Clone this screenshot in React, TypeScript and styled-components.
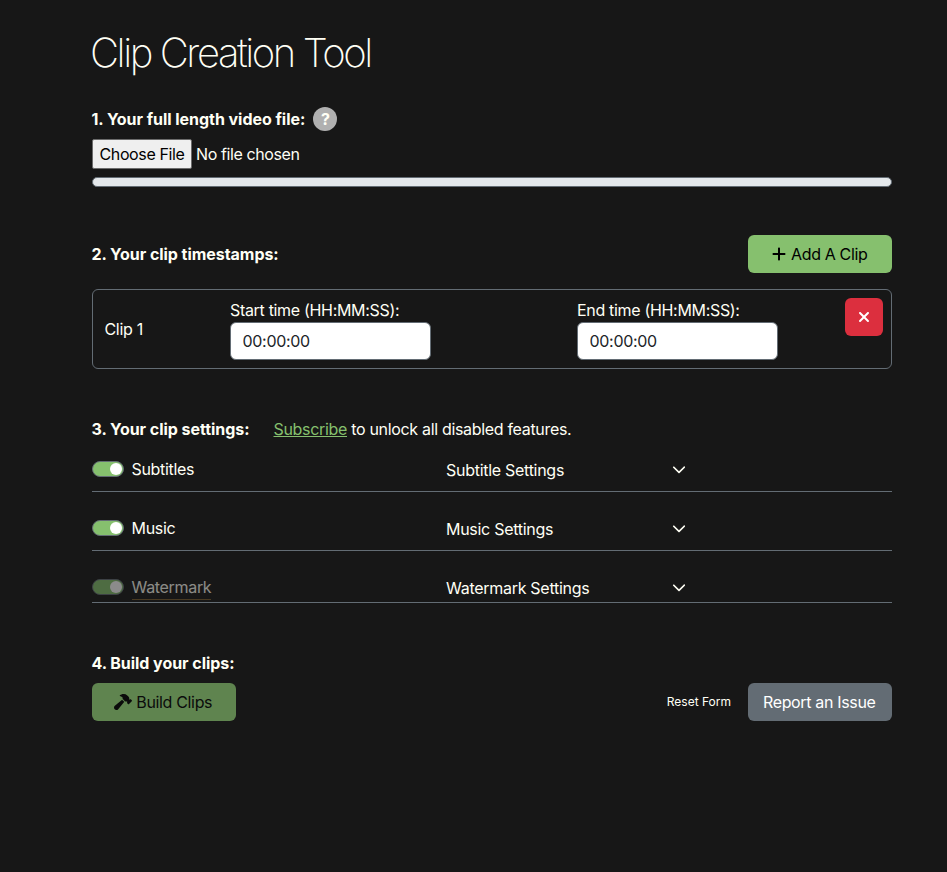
import React from "react";
import styled, { createGlobalStyle } from "styled-components";
import { FaPlus, FaXmark, FaHammer, FaChevronDown } from "react-icons/fa6";

const GlobalStyle = createGlobalStyle`
  *, *::before, *::after { box-sizing: border-box; }
  body {
    margin: 0;
    background: #171717;
    color: #fffff5;
    font: 400 16px/24px Inter, "Liberation Sans", sans-serif;
    letter-spacing: -0.32px;
  }
`;

const Page = styled.main`
  min-height: 872px;
  width: 892px;
  padding: 29px 0 0 92px;
`;

const Title = styled.h1`
  margin: 0 0 0 -2px;
  font-size: 40px;
  font-weight: 200;
  line-height: 48px;
  letter-spacing: -2.43px;
  white-space: nowrap;
`;

const Section = styled.section<{ $top: number }>`
  margin-top: ${(p) => p.$top}px;
`;

const Row = styled.div<{ $height?: number; $top?: number }>`
  display: flex;
  align-items: center;
  height: ${(p) => p.$height ?? 24}px;
  margin-top: ${(p) => p.$top ?? 0}px;
`;

const Heading = styled.h2`
  margin: 0 0 0 -0.5px;
  font-size: 16px;
  font-weight: 700;
  line-height: 24px;
  letter-spacing: -0.045px;
  white-space: nowrap;
`;

const Help = styled.span`
  width: 24px;
  height: 24px;
  margin-left: 8px;
  border-radius: 50%;
  background: #b0b0b0;
  color: #fffff5;
  font-weight: 700;
  text-align: center;
`;

const FileRow = styled.div`
  display: flex;
  align-items: center;
  margin-top: 8px;
  height: 30px;
`;

const ChooseButton = styled.button`
  width: 100px;
  height: 30px;
  padding: 0;
  margin-right: 4px;
  border: 1px solid #6b6b6b;
  border-radius: 2px;
  background: #efefef;
  color: #000;
  font: inherit;
  letter-spacing: -0.38px;
`;

const FileStatus = styled.span`
  letter-spacing: -0.4px;
`;

const Progress = styled.div`
  height: 10px;
  margin-top: 8px;
  border: 1px solid #636c74;
  border-radius: 5px;
  background: #e4e8eb;
`;

const Button = styled.button<{ $bg: string; $color?: string }>`
  display: flex;
  align-items: center;
  justify-content: center;
  gap: 4px;
  width: 144px;
  height: 38px;
  padding: 0 1.5px 0 0;
  border: 0;
  border-radius: 6px;
  background: ${(p) => p.$bg};
  color: ${(p) => p.$color ?? "#000"};
  font: inherit;
  letter-spacing: -0.34px;
  white-space: nowrap;
`;

const Spacer = styled.div`
  flex: 1;
`;

const ClipCard = styled.div`
  display: grid;
  grid-template-columns: 125px 347px 1fr 38px;
  height: 80px;
  margin-top: 16px;
  padding: 8px 8px 0 12px;
  border: 1px solid #636c74;
  border-radius: 6px;
`;

const ClipName = styled.div`
  padding-top: 19px;
  margin-left: -0.5px;
`;

const Label = styled.label`
  display: block;
  white-space: nowrap;
`;

const TimeInput = styled.input`
  display: block;
  width: 201px;
  height: 38px;
  padding: 0 11.5px;
  border: 1px solid #636c74;
  border-radius: 6px;
  background: #fff;
  color: #212529;
  font: inherit;
  letter-spacing: -0.3px;
`;

const DeleteButton = styled(Button)`
  width: 38px;
  padding: 0;
`;

const Notice = styled.span`
  margin-left: 24px;
  white-space: nowrap;
`;

const Link = styled.a`
  color: #86c06e;
  text-decoration: underline;
`;

const Setting = styled.div<{ $height: number; $top: number }>`
  display: grid;
  grid-template-columns: 354px 227px 1fr;
  height: ${(p) => p.$height}px;
  margin-top: ${(p) => p.$top}px;
  border-bottom: 1px solid #636c74;
`;

const SwitchLabel = styled.label<{ $disabled?: boolean }>`
  display: flex;
  align-items: flex-start;
  gap: 7.5px;
  height: 24px;
  opacity: ${(p) => (p.$disabled ? 0.5 : 1)};
`;

const Track = styled.span`
  display: flex;
  justify-content: flex-end;
  align-items: center;
  width: 32px;
  height: 16px;
  margin-top: 4px;
  padding-right: 1px;
  border: 1px solid #636c74;
  border-radius: 8px;
  background: #86c06e;
`;

const Knob = styled.span`
  width: 12px;
  height: 12px;
  border-radius: 50%;
  background: #fff;
`;

const SwitchText = styled.span<{ $underlined?: boolean }>`
  height: 25px;
  border-bottom: ${(p) => (p.$underlined ? "1px solid #7d6030" : "0")};
`;

const SettingName = styled.div`
  padding-top: 1px;
  letter-spacing: -0.28px;
`;

const Chevron = styled(FaChevronDown)`
  width: 14px;
  height: 14px;
  margin-top: 5px;
  margin-left: -1px;
`;

const ResetButton = styled.button`
  padding: 0;
  margin: 0 17px 1px 0;
  border: 0;
  background: none;
  color: #fffff5;
  font: 12px/18px Inter, sans-serif;
  letter-spacing: 0;
`;

const settings = [
  { name: "Subtitles", detail: "Subtitle Settings", height: 35, top: 16 },
  { name: "Music", detail: "Music Settings", height: 35, top: 24 },
  { name: "Watermark", detail: "Watermark Settings", height: 28, top: 24, disabled: true },
];

export default function App() {
  return (
    <>
      <GlobalStyle />
      <Page>
        <Title>Clip Creation Tool</Title>
        <Section $top={30}>
          <Row>
            <Heading>1. Your full length video file:</Heading>
            <Help>?</Help>
          </Row>
          <FileRow>
            <ChooseButton>Choose File</ChooseButton>
            <FileStatus>No file chosen</FileStatus>
          </FileRow>
          <Progress />
        </Section>
        <Section $top={48}>
          <Row $height={38}>
            <Heading>2. Your clip timestamps:</Heading>
            <Spacer />
            <Button $bg="#86c06e"><FaPlus size={16} />Add A Clip</Button>
          </Row>
          <ClipCard>
            <ClipName>Clip 1</ClipName>
            <Label>Start time (HH:MM:SS):<TimeInput defaultValue="00:00:00" /></Label>
            <Label>End time (HH:MM:SS):<TimeInput defaultValue="00:00:00" /></Label>
            <DeleteButton $bg="#dc2f3e" $color="#fff" aria-label="Remove clip"><FaXmark size={16} /></DeleteButton>
          </ClipCard>
        </Section>
        <Section $top={48}>
          <Row>
            <Heading>3. Your clip settings:</Heading>
            <Notice><Link>Subscribe</Link> to unlock all disabled features.</Notice>
          </Row>
          {settings.map((s) => (
            <Setting key={s.name} $height={s.height} $top={s.top}>
              <SwitchLabel $disabled={s.disabled}>
                <Track><Knob /></Track>
                <SwitchText $underlined={s.disabled}>{s.name}</SwitchText>
              </SwitchLabel>
              <SettingName>{s.detail}</SettingName>
              <Chevron />
            </Setting>
          ))}
        </Section>
        <Section $top={48}>
          <Heading>4. Build your clips:</Heading>
          <Row $height={38} $top={8}>
            <Button $bg="#5f844f" $color="#0b0b0b"><FaHammer size={18} />Build Clips</Button>
            <Spacer />
            <ResetButton>Reset Form</ResetButton>
            <Button $bg="#636c74" $color="#fff">Report an Issue</Button>
          </Row>
        </Section>
      </Page>
    </>
  );
}
